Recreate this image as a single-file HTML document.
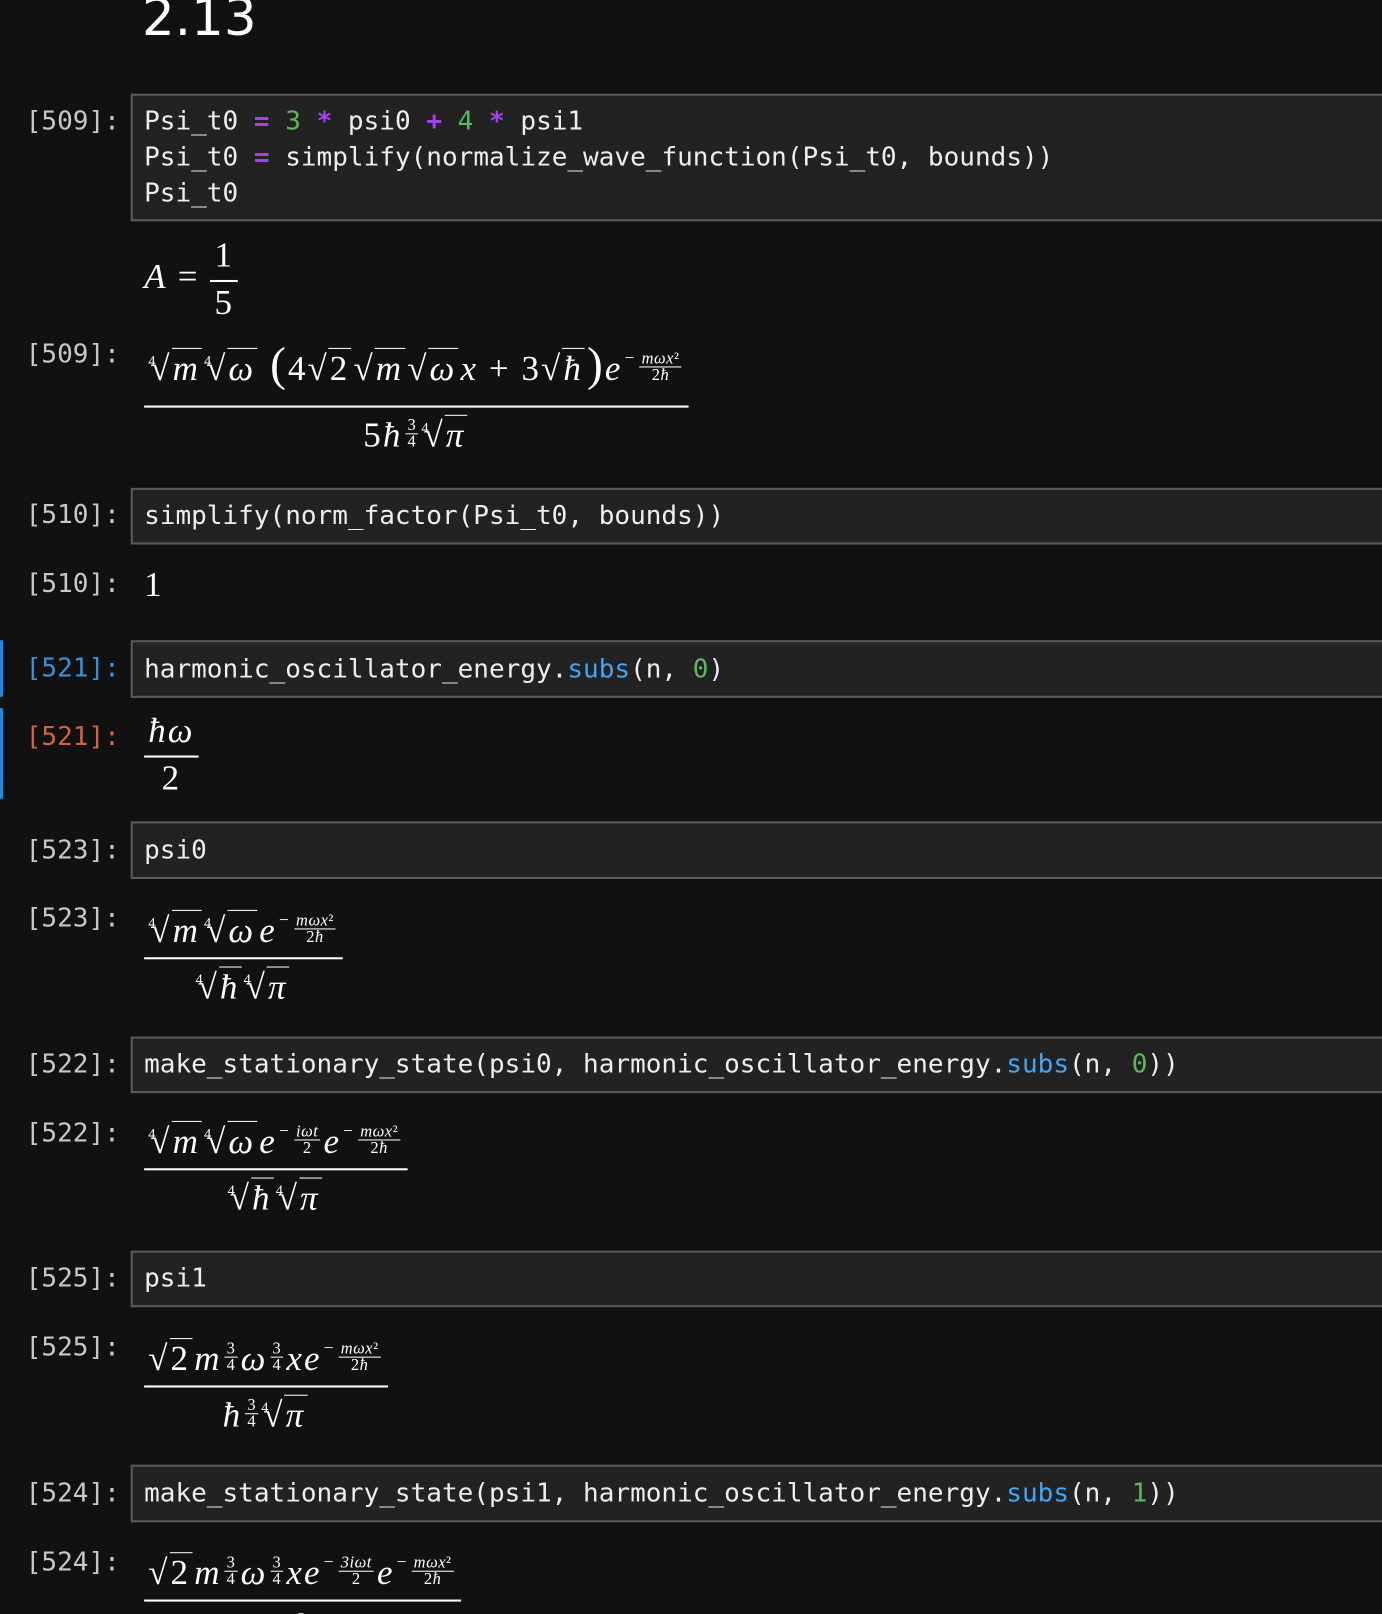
<!DOCTYPE html>
<html><head><meta charset="utf-8">
<style>
html,body{margin:0;padding:0;background:#111;overflow:hidden;width:1382px;height:1614px}
#clip{position:absolute;left:0;top:0;width:1382px;height:1614px;overflow:hidden;contain:strict}
#w{position:absolute;left:0;top:0;width:1343px;height:1568px;overflow:hidden;transform:scale(1.0293);transform-origin:0 0;color:#fff}
.a{position:absolute}
.p{position:absolute;left:25px;font:25.3px "DejaVu Sans Mono","Liberation Mono",monospace;color:#c8c8c8;white-space:pre}
.box{position:absolute;left:127px;right:-10px;background:#222;border:2px solid #5a5a5a;box-sizing:border-box}
.code{position:absolute;left:140px;font:25.3px/35px "DejaVu Sans Mono","Liberation Mono",monospace;color:#eee;white-space:pre}
.o{color:#a93ff0;font-weight:bold}.g{color:#5cb85c}.b{color:#42a5f5}
.bar{position:absolute;left:0;width:3px;background:#1e88e5}
.m{position:absolute;left:140px;font:italic 34px "Liberation Serif","DejaVu Serif",serif;color:#fff;white-space:nowrap;letter-spacing:2px}
.r{font-style:normal}
.fr{display:inline-flex;flex-direction:column;align-items:center;vertical-align:middle}
.fr>.n{border-bottom:2px solid #fff;padding:0 4px 6px;width:100%;text-align:center;box-sizing:border-box}
.fr>.d{padding-top:9px}
.rt{white-space:nowrap;margin-right:2px}
.rt .ix{font-size:14px;font-style:normal;vertical-align:14px;margin-right:-7px}
.rt .s{font-style:normal}
.ov{border-top:1.5px solid #fff;padding:1px 2px 0 1px}
.sm{font-size:16px;display:inline-flex;flex-direction:column;align-items:center;vertical-align:16px;line-height:15px;letter-spacing:0.5px;margin:0 3px}
.sm .n{border-bottom:1px solid #fff;padding:0 2px}
.ex{font-size:17px;font-style:normal;vertical-align:16px;margin-left:2px}
.ex .sm{vertical-align:0}
.fs>.n{padding-bottom:4px}.fs>.d{padding-top:2px}
</style></head><body><div id="clip"><div id="w">
<div class="a" style="left:138px;top:-12px;font:50px 'DejaVu Sans','Liberation Sans',sans-serif;color:#fff">2.13</div>

<div class="p" style="top:103px">[509]:</div>
<div class="box" style="top:91px;height:124px"></div>
<div class="code" style="top:100px">Psi_t0 <span class="o">=</span> <span class="g">3</span> <span class="o">*</span> psi0 <span class="o">+</span> <span class="g">4</span> <span class="o">*</span> psi1
Psi_t0 <span class="o">=</span> simplify(normalize_wave_function(Psi_t0, bounds))
Psi_t0</div>

<div class="m" style="top:230px">A <span class="r">=</span> <span class="fr fs r"><span class="n">1</span><span class="d">5</span></span></div>

<div class="p" style="top:329px">[509]:</div>
<div class="m" style="top:327px"><span class="fr"><span class="n" style="padding-bottom:14px"><span class="rt"><span class="ix">4</span><span class="s">√</span><span class="ov">m</span></span><span class="rt"><span class="ix">4</span><span class="s">√</span><span class="ov">ω</span></span> <span class="r" style="font-size:46px">(</span><span class="r">4</span><span class="rt"><span class="s">√</span><span class="ov r">2</span></span><span class="rt"><span class="s">√</span><span class="ov">m</span></span><span class="rt"><span class="s">√</span><span class="ov">ω</span></span>x <span class="r">+</span> <span class="r">3</span><span class="rt"><span class="s">√</span><span class="ov">ħ</span></span><span class="r" style="font-size:46px">)</span>e<span class="ex">−<span class="sm"><span class="n"><i>mωx</i>²</span><span>2<i>ħ</i></span></span></span></span><span class="d"><span class="r">5</span>ħ<span class="sm r"><span class="n">3</span><span>4</span></span><span class="rt"><span class="ix">4</span><span class="s">√</span><span class="ov">π</span></span></span></span></div>

<div class="p" style="top:485px">[510]:</div>
<div class="box" style="top:474px;height:55px"></div>
<div class="code" style="top:483px">simplify(norm_factor(Psi_t0, bounds))</div>
<div class="p" style="top:552px">[510]:</div>
<div class="m r" style="top:550px;font-style:normal">1</div>

<div class="bar" style="top:622px;height:55px"></div>
<div class="p" style="top:634px;color:#3a8fd6">[521]:</div>
<div class="box" style="top:622px;height:56px"></div>
<div class="code" style="top:632px">harmonic_oscillator_energy.<span class="b">subs</span>(n, <span class="g">0</span>)</div>
<div class="bar" style="top:688px;height:88px"></div>
<div class="p" style="top:701px;color:#d0643c">[521]:</div>
<div class="m" style="top:692px"><span class="fr fs"><span class="n">ħω</span><span class="d r">2</span></span></div>

<div class="box" style="top:798px;height:56px"></div>
<div class="p" style="top:811px">[523]:</div>
<div class="code" style="top:808px">psi0</div>
<div class="p" style="top:877px">[523]:</div>
<div class="m" style="top:884px"><span class="fr"><span class="n"><span class="rt"><span class="ix">4</span><span class="s">√</span><span class="ov">m</span></span><span class="rt"><span class="ix">4</span><span class="s">√</span><span class="ov">ω</span></span>e<span class="ex">−<span class="sm"><span class="n"><i>mωx</i>²</span><span>2<i>ħ</i></span></span></span></span><span class="d"><span class="rt"><span class="ix">4</span><span class="s">√</span><span class="ov">ħ</span></span><span class="rt"><span class="ix">4</span><span class="s">√</span><span class="ov">π</span></span></span></span></div>

<div class="box" style="top:1007px;height:55px"></div>
<div class="p" style="top:1019px">[522]:</div>
<div class="code" style="top:1016px">make_stationary_state(psi0, harmonic_oscillator_energy.<span class="b">subs</span>(n, <span class="g">0</span>))</div>
<div class="p" style="top:1086px">[522]:</div>
<div class="m" style="top:1089px"><span class="fr"><span class="n"><span class="rt"><span class="ix">4</span><span class="s">√</span><span class="ov">m</span></span><span class="rt"><span class="ix">4</span><span class="s">√</span><span class="ov">ω</span></span>e<span class="ex">−<span class="sm"><span class="n"><i>iωt</i></span><span>2</span></span></span>e<span class="ex">−<span class="sm"><span class="n"><i>mωx</i>²</span><span>2<i>ħ</i></span></span></span></span><span class="d"><span class="rt"><span class="ix">4</span><span class="s">√</span><span class="ov">ħ</span></span><span class="rt"><span class="ix">4</span><span class="s">√</span><span class="ov">π</span></span></span></span></div>

<div class="box" style="top:1215px;height:55px"></div>
<div class="p" style="top:1227px">[525]:</div>
<div class="code" style="top:1224px">psi1</div>
<div class="p" style="top:1294px">[525]:</div>
<div class="m" style="top:1300px"><span class="fr"><span class="n"><span class="rt"><span class="s">√</span><span class="ov r">2</span></span>m<span class="sm r"><span class="n">3</span><span>4</span></span>ω<span class="sm r"><span class="n">3</span><span>4</span></span>xe<span class="ex">−<span class="sm"><span class="n"><i>mωx</i>²</span><span>2<i>ħ</i></span></span></span></span><span class="d">ħ<span class="sm r"><span class="n">3</span><span>4</span></span><span class="rt"><span class="ix">4</span><span class="s">√</span><span class="ov">π</span></span></span></span></div>

<div class="box" style="top:1423px;height:56px"></div>
<div class="p" style="top:1436px">[524]:</div>
<div class="code" style="top:1433px">make_stationary_state(psi1, harmonic_oscillator_energy.<span class="b">subs</span>(n, <span class="g">1</span>))</div>
<div class="p" style="top:1503px">[524]:</div>
<div class="m" style="top:1508px"><span class="fr"><span class="n"><span class="rt"><span class="s">√</span><span class="ov r">2</span></span>m<span class="sm r"><span class="n">3</span><span>4</span></span>ω<span class="sm r"><span class="n">3</span><span>4</span></span>xe<span class="ex">−<span class="sm"><span class="n"><i>3iωt</i></span><span>2</span></span></span>e<span class="ex">−<span class="sm"><span class="n"><i>mωx</i>²</span><span>2<i>ħ</i></span></span></span></span><span class="d" style="font-size:16px;font-style:normal">3</span></span></div>
</div></div></body></html>
